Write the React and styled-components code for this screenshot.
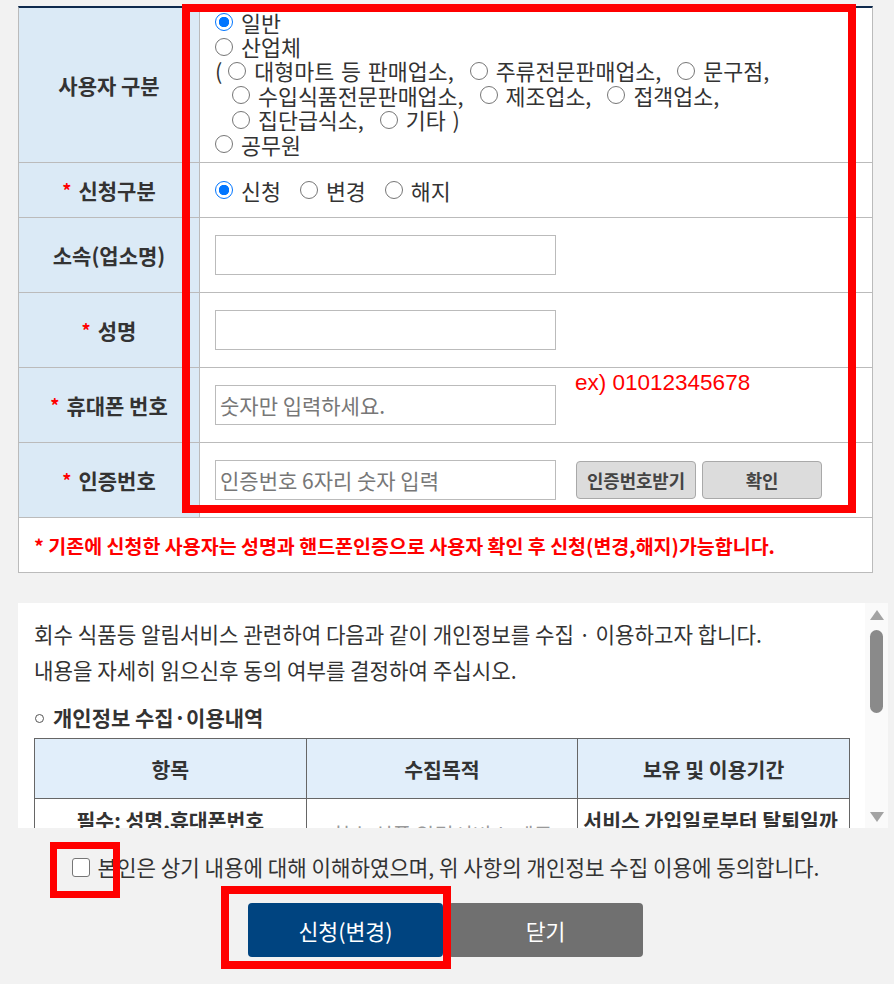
import React from "react";
import styled, { createGlobalStyle } from "styled-components";

const GlobalStyle = createGlobalStyle`
  html, body {
    margin: 0;
    padding: 0;
    background: #f2f2f2;
  }
  body {
    font-family: "Noto Sans CJK KR", "Noto Sans", sans-serif;
    color: #333;
  }
  * {
    box-sizing: border-box;
  }
`;

const Page = styled.div`
  position: relative;
  width: 894px;
  height: 984px;
  padding: 6px 0 0 18px;
  overflow: hidden;
`;

const FormTable = styled.div`
  width: 855px;
  background: #fff;
  border: 1px solid #bbb;
  border-top: 2px solid #0f2a4d;
`;

const Row = styled.div`
  display: grid;
  grid-template-columns: 181px 1fr;
  height: ${(p) => p.$h}px;
  border-bottom: 1px solid #bbb;
`;

const Label = styled.div`
  background: #dbeaf6;
  border-right: 1px solid #bbb;
  display: flex;
  align-items: center;
  justify-content: center;
  font-size: 21px;
  font-weight: 700;
  color: #333;
`;

const Star = styled.span`
  color: #ff0000;
  font-size: 18px;
  font-weight: 700;
  margin-right: 7px;
`;

const Cell = styled.div`
  display: flex;
  align-items: center;
  padding-left: 15px;
`;

const StackCell = styled.div`
  display: flex;
  flex-direction: column;
  padding: 2px 0 0 15px;
`;

const Line = styled.div`
  display: flex;
  align-items: center;
  height: 24.4px;
  white-space: nowrap;
  word-spacing: 2px;
  padding-left: ${(p) => p.$indent || 0}px;
`;

const Paren = styled.span`
  font-size: 21.7px;
  margin-right: 6px;
`;

const Option = styled.label`
  display: inline-flex;
  align-items: center;
  font-size: 21.7px;
  margin-right: ${(p) => p.$gap || 0}px;
  white-space: nowrap;
`;

const Radio = styled.input.attrs({ type: "radio" })`
  appearance: none;
  width: 18px;
  height: 18px;
  margin: 0 8px 0 0;
  border-radius: 50%;
  border: 1.5px solid #767676;
  background: #fff;
  flex: none;
  &:checked {
    border-color: #0075ff;
    background: radial-gradient(circle, #0075ff 0 4.9px, #fff 5.5px);
  }
`;

const TextInput = styled.input`
  width: 341px;
  height: 40px;
  border: 1px solid #bbb;
  padding: 0 4px;
  font-family: inherit;
  font-size: 21px;
  color: #333;
  outline: none;
  &::placeholder {
    color: #777;
  }
`;

const Hint = styled.span`
  align-self: flex-start;
  margin: 2px 0 0 19px;
  font-family: "Liberation Sans", Arial, sans-serif;
  font-size: 22.5px;
  line-height: 26px;
  color: #ff0000;
`;

const GrayButton = styled.button`
  width: 120px;
  height: 38px;
  margin-left: ${(p) => p.$ml}px;
  border: 1px solid #a9a9a9;
  border-radius: 4px;
  background: #dcdcdc;
  font-family: inherit;
  font-size: 17.8px;
  font-weight: 700;
  color: #444;
  padding: 0;
`;

const Note = styled.div`
  height: 54px;
  display: flex;
  align-items: center;
  padding-left: 15px;
  font-size: 19.5px;
  font-weight: 700;
  color: #ff0000;
`;

const PrivacyBox = styled.div`
  display: flex;
  width: 870px;
  height: 225px;
  margin-top: 30px;
  background: #fff;
`;

const PrivacyContent = styled.div`
  flex: 1;
  overflow: hidden;
  padding: 13px 15px 0 16px;
  font-size: 21.2px;
  line-height: 36px;
  color: #333;
`;

const Para = styled.p`
  margin: 0;
  white-space: nowrap;
`;

const Heading = styled.div`
  display: flex;
  align-items: center;
  margin-top: 11px;
  font-weight: 700;
  font-size: 21px;
`;

const Dot = styled.span`
  width: 9px;
  height: 9px;
  border: 1px solid #555;
  border-radius: 50%;
  margin: 2px 9px 0 1px;
`;

const InfoTable = styled.table`
  width: 100%;
  margin-top: 3px;
  border-collapse: collapse;
  table-layout: fixed;
  font-size: 20.5px;
  line-height: 28px;
`;

const Th = styled.th`
  height: 60px;
  border: 1px solid #666;
  background: #e1eefa;
  font-weight: 700;
  color: #333;
`;

const Td = styled.td`
  border: 1px solid #666;
  padding: 7px 5px;
  text-align: ${(p) => p.$align || "center"};
  font-weight: ${(p) => (p.$bold ? 700 : 400)};
  color: ${(p) => (p.$bold ? "#333" : "#999")};
  vertical-align: middle;
`;

const ScrollBar = styled.div`
  width: 23px;
  background: #fafafa;
  display: flex;
  flex-direction: column;
  align-items: center;
  padding: 7px 0 6px;
`;

const Arrow = styled.div`
  width: 0;
  height: 0;
  border-left: 7.5px solid transparent;
  border-right: 7.5px solid transparent;
  ${(p) =>
    p.$down
      ? "border-top: 10px solid #a3a3a3;"
      : "border-bottom: 10px solid #a3a3a3;"}
`;

const Thumb = styled.div`
  width: 13px;
  height: 83px;
  margin-top: 10px;
  border-radius: 7px;
  background: #8a8a8a;
`;

const Spacer = styled.div`
  flex: 1;
`;

const AgreeRow = styled.label`
  width: 855px;
  height: 28px;
  margin-top: 24px;
  display: flex;
  align-items: center;
  justify-content: center;
  font-size: 21.2px;
  color: #333;
  white-space: nowrap;
`;

const CheckBox = styled.input.attrs({ type: "checkbox" })`
  appearance: none;
  width: 18px;
  height: 19px;
  margin: 2px 8px 0 0;
  border: 1.5px solid #767676;
  border-radius: 3px;
  background: #fff;
  flex: none;
`;

const ButtonRow = styled.div`
  width: 855px;
  margin-top: 23px;
  display: flex;
  justify-content: center;
  gap: 5px;
`;

const ActionButton = styled.button`
  width: 195px;
  height: 54px;
  border: none;
  border-radius: 4px;
  background: ${(p) => (p.$primary ? "#004480" : "#707070")};
  color: #fff;
  font-family: inherit;
  font-size: 21.6px;
  padding: 0;
`;

const Highlight = styled.div`
  position: absolute;
  left: ${(p) => p.$x}px;
  top: ${(p) => p.$y}px;
  width: ${(p) => p.$w}px;
  height: ${(p) => p.$h}px;
  border: ${(p) => p.$b || 8}px solid #ff0000;
  pointer-events: none;
`;

const App = () => {
  return (
    <Page>
      <GlobalStyle />
      <FormTable>
        <Row $h={155}>
          <Label>사용자 구분</Label>
          <StackCell>
            <Line>
              <Option>
                <Radio name="utype" defaultChecked />
                일반
              </Option>
            </Line>
            <Line>
              <Option>
                <Radio name="utype" />
                산업체
              </Option>
            </Line>
            <Line>
              <Paren>(</Paren>
              <Option $gap={16}>
                <Radio name="utype" />
                대형마트 등 판매업소,
              </Option>
              <Option $gap={16}>
                <Radio name="utype" />
                주류전문판매업소,
              </Option>
              <Option>
                <Radio name="utype" />
                문구점,
              </Option>
            </Line>
            <Line $indent={17}>
              <Option $gap={16}>
                <Radio name="utype" />
                수입식품전문판매업소,
              </Option>
              <Option $gap={16}>
                <Radio name="utype" />
                제조업소,
              </Option>
              <Option>
                <Radio name="utype" />
                접객업소,
              </Option>
            </Line>
            <Line $indent={17}>
              <Option $gap={16}>
                <Radio name="utype" />
                집단급식소,
              </Option>
              <Option>
                <Radio name="utype" />
                기타 )
              </Option>
            </Line>
            <Line>
              <Option>
                <Radio name="utype" />
                공무원
              </Option>
            </Line>
          </StackCell>
        </Row>
        <Row $h={55}>
          <Label>
            <Star>*</Star>신청구분
          </Label>
          <Cell>
            <Option $gap={19}>
              <Radio name="req" defaultChecked />
              신청
            </Option>
            <Option $gap={19}>
              <Radio name="req" />
              변경
            </Option>
            <Option>
              <Radio name="req" />
              해지
            </Option>
          </Cell>
        </Row>
        <Row $h={75}>
          <Label>소속(업소명)</Label>
          <Cell>
            <TextInput />
          </Cell>
        </Row>
        <Row $h={75}>
          <Label>
            <Star>*</Star>성명
          </Label>
          <Cell>
            <TextInput />
          </Cell>
        </Row>
        <Row $h={75}>
          <Label>
            <Star>*</Star>휴대폰 번호
          </Label>
          <Cell>
            <TextInput placeholder="숫자만 입력하세요." />
            <Hint>ex) 01012345678</Hint>
          </Cell>
        </Row>
        <Row $h={75}>
          <Label>
            <Star>*</Star>인증번호
          </Label>
          <Cell>
            <TextInput placeholder="인증번호 6자리 숫자 입력" />
            <GrayButton $ml={20}>인증번호받기</GrayButton>
            <GrayButton $ml={6}>확인</GrayButton>
          </Cell>
        </Row>
        <Note>
          * 기존에 신청한 사용자는 성명과 핸드폰인증으로 사용자 확인 후
          신청(변경,해지)가능합니다.
        </Note>
      </FormTable>

      <PrivacyBox>
        <PrivacyContent>
          <Para>
            회수 식품등 알림서비스 관련하여 다음과 같이 개인정보를 수집 ·
            이용하고자 합니다.
          </Para>
          <Para>내용을 자세히 읽으신후 동의 여부를 결정하여 주십시오.</Para>
          <Heading>
            <Dot />
            개인정보 수집·이용내역
          </Heading>
          <InfoTable>
            <thead>
              <tr>
                <Th>항목</Th>
                <Th>수집목적</Th>
                <Th>보유 및 이용기간</Th>
              </tr>
            </thead>
            <tbody>
              <tr>
                <Td $bold>
                  필수: 성명,휴대폰번호
                  <br />
                  선택: 소속(업소명)
                </Td>
                <Td>회수 식품 알림서비스 제공</Td>
                <Td $bold $align="left">
                  서비스 가입일로부터 탈퇴일까지
                </Td>
              </tr>
            </tbody>
          </InfoTable>
        </PrivacyContent>
        <ScrollBar>
          <Arrow />
          <Thumb />
          <Spacer />
          <Arrow $down />
        </ScrollBar>
      </PrivacyBox>

      <AgreeRow>
        <CheckBox />
        본인은 상기 내용에 대해 이해하였으며, 위 사항의 개인정보 수집 이용에
        동의합니다.
      </AgreeRow>

      <ButtonRow>
        <ActionButton $primary>신청(변경)</ActionButton>
        <ActionButton>닫기</ActionButton>
      </ButtonRow>

      <Highlight $x={182} $y={4} $w={674} $h={509} />
      <Highlight $x={50} $y={842} $w={70} $h={56} $b={7} />
      <Highlight $x={221} $y={886} $w={230} $h={83} />
    </Page>
  );
};

export default App;
